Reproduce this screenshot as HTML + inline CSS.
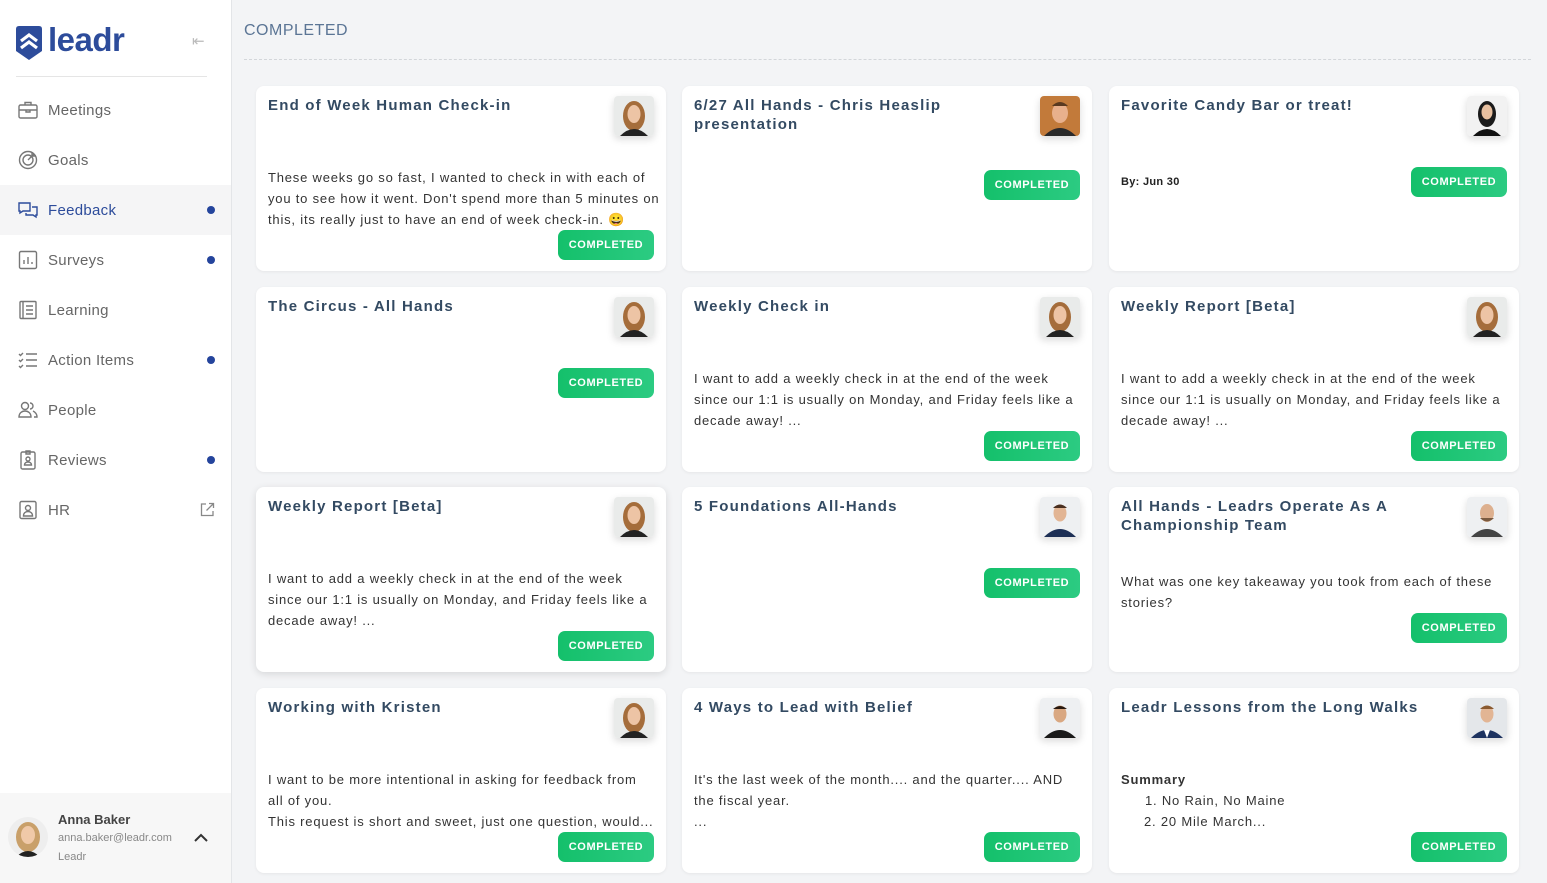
<!DOCTYPE html>
<html><head><meta charset="utf-8"><style>
*{box-sizing:border-box;margin:0;padding:0}
body{width:1547px;height:883px;overflow:hidden;background:#f3f4f6;font-family:"Liberation Sans",sans-serif;position:relative}
.sb{position:absolute;left:0;top:0;width:232px;height:883px;background:#fff;border-right:1px solid #e3e5e8}
.nav{position:absolute;left:0;width:231px;height:50px;display:flex;align-items:center;font-size:15px;color:#666;letter-spacing:.3px}
.nav svg{position:absolute;left:18px;top:15px}
.nav span{position:absolute;left:48px}
.dot{position:absolute;left:207px;width:8px;height:8px;border-radius:50%;background:#24449c}
.act{background:#f5f5f6;color:#2d4c9b}
.hdr{position:absolute;left:244px;top:22px;font-size:16px;color:#5b7595;letter-spacing:.5px}
.dash{position:absolute;left:244px;top:59px;width:1287px;border-top:1px dashed #d3d6da}
.card{position:absolute;width:410px;height:185px;background:#fff;border-radius:8px;box-shadow:0 1px 3px rgba(0,0,0,.06)}
.t{position:absolute;left:12px;top:10px;width:330px;font-size:15px;font-weight:bold;letter-spacing:1.2px;color:#334a62;line-height:19px}
.av{position:absolute;right:12px;top:10px;width:40px;height:40px;border-radius:4px;overflow:hidden;box-shadow:0 3px 8px rgba(0,0,0,.15)}
.b{position:absolute;left:12px;top:81px;width:392px;font-size:13px;line-height:21px;color:#333;letter-spacing:.8px}
.btn{position:absolute;right:12px;width:96px;height:30px;border-radius:7px;background:linear-gradient(90deg,#14c06b,#2ccb82);color:#fff;font-size:11px;font-weight:bold;letter-spacing:.6px;display:flex;align-items:center;justify-content:center}
</style></head><body>
<div class="sb">
 <svg style="position:absolute;left:16px;top:26px" width="26" height="34" viewBox="0 0 26 34"><path d="M0 3Q0 0 3 0H23Q26 0 26 3V25L13 34L0 25Z" fill="#2d4c9b"/><path d="M5 15L13 9L21 15M5 22L13 16L21 22" stroke="#fff" stroke-width="3.2" fill="none"/></svg>
 <div style="position:absolute;left:48px;top:21px;font-size:33px;font-weight:bold;color:#2d4c9b;letter-spacing:-.5px">leadr</div>
 <div style="position:absolute;left:192px;top:32px;font-size:15px;color:#bbb">⇤</div>
 <div style="position:absolute;left:16px;top:76px;width:191px;border-top:1px solid #e5e5e5"></div>
 <div class="nav" style="top:85px"><svg width="20" height="20" viewBox="0 0 20 20" fill="none" stroke="#777" stroke-width="1.4"><rect x="1" y="5" width="18" height="13" rx="1.5"/><path d="M7 5V2.5h6V5M1 10h18M8 10v2h4v-2"/></svg><span>Meetings</span></div>
 <div class="nav" style="top:135px"><svg width="20" height="20" viewBox="0 0 20 20" fill="none" stroke="#777" stroke-width="1.4"><circle cx="10" cy="10" r="8.5"/><circle cx="10" cy="10" r="5"/><path d="M10 10L16 4M14 2v4h4"/></svg><span>Goals</span></div>
 <div class="nav act" style="top:185px"><svg width="20" height="20" viewBox="0 0 20 20" fill="none" stroke="#2d4c9b" stroke-width="1.4"><path d="M1 3h11v8H5l-3 2v-2H1z"/><path d="M14 7h5v8h-1v2l-3-2H8v-2"/></svg><span>Feedback</span><i class="dot"></i></div>
 <div class="nav" style="top:235px"><svg width="20" height="20" viewBox="0 0 20 20" fill="none" stroke="#777" stroke-width="1.4"><rect x="1.5" y="1.5" width="17" height="17" rx="1.5"/><path d="M6 14v-4M10 14V7M14 14v-2"/></svg><span>Surveys</span><i class="dot"></i></div>
 <div class="nav" style="top:285px"><svg width="20" height="20" viewBox="0 0 20 20" fill="none" stroke="#777" stroke-width="1.4"><rect x="2" y="1.5" width="16" height="17" rx="1"/><path d="M5 1.5v17M8 6h7M8 10h7M8 14h7"/></svg><span>Learning</span></div>
 <div class="nav" style="top:335px"><svg width="20" height="20" viewBox="0 0 20 20" fill="none" stroke="#777" stroke-width="1.4"><path d="M1 4l1.5 1.5L5 3M1 10l1.5 1.5L5 9M1 16l1.5 1.5L5 15M8 4h11M8 10h11M8 16h11"/></svg><span>Action Items</span><i class="dot"></i></div>
 <div class="nav" style="top:385px"><svg width="20" height="20" viewBox="0 0 20 20" fill="none" stroke="#777" stroke-width="1.4"><circle cx="7" cy="6" r="3.5"/><path d="M1 17c0-4 3-6 6-6s6 2 6 6z"/><path d="M12 3a3 3 0 0 1 0 6M15 11c2 1 4 3 4 6h-3"/></svg><span>People</span></div>
 <div class="nav" style="top:435px"><svg width="20" height="20" viewBox="0 0 20 20" fill="none" stroke="#777" stroke-width="1.4"><rect x="3" y="2" width="14" height="17" rx="1.5"/><path d="M8 1h4v3H8z"/><circle cx="10" cy="9" r="2"/><path d="M6.5 15c0-2 1.5-3 3.5-3s3.5 1 3.5 3z"/></svg><span>Reviews</span><i class="dot"></i></div>
 <div class="nav" style="top:485px"><svg width="20" height="20" viewBox="0 0 20 20" fill="none" stroke="#777" stroke-width="1.4"><rect x="2" y="1.5" width="16" height="17" rx="1.5"/><circle cx="10" cy="8" r="2.5"/><path d="M5.5 16c0-3 2-4.5 4.5-4.5s4.5 1.5 4.5 4.5z"/></svg><span>HR</span><svg style="left:200px;top:17px" width="15" height="15" viewBox="0 0 15 15" fill="none" stroke="#888" stroke-width="1.3"><path d="M6 2H1.5v11.5H13V9M9 1.5h4.5V6M13.5 1.5L6.5 8.5"/></svg></div>
 <div style="position:absolute;left:0;top:793px;width:231px;height:90px;background:#f7f7f7">
  <div style="position:absolute;left:8px;top:24px;width:40px;height:40px;border-radius:50%;overflow:hidden;background:#eee"><svg width="40" height="40"><ellipse cx="20" cy="20" rx="12" ry="15" fill="#c9a06a"/><ellipse cx="20" cy="18" rx="7" ry="9" fill="#f0c9a8"/><path d="M8 40q12-12 24 0" fill="#222"/></svg></div>
  <div style="position:absolute;left:58px;top:19px;font-size:13px;font-weight:bold;color:#444">Anna Baker</div>
  <div style="position:absolute;left:58px;top:39px;font-size:11px;color:#888">anna.baker@leadr.com</div>
  <div style="position:absolute;left:58px;top:58px;font-size:11px;color:#888">Leadr</div>
  <svg style="position:absolute;left:194px;top:40px" width="14" height="9" viewBox="0 0 14 9" fill="none" stroke="#333" stroke-width="2"><path d="M1 8l6-6 6 6"/></svg>
 </div>
</div>
<div class="hdr">COMPLETED</div>
<div class="dash"></div>

<div class="card" style="left:256px;top:86px"><div class="t">End of Week Human Check-in</div><div class="av"><svg width="40" height="40"><rect width="40" height="40" fill="#e9ebea"/><ellipse cx="20" cy="20" rx="11" ry="15" fill="#a56d3b"/><ellipse cx="20" cy="18" rx="6.5" ry="9" fill="#edc4a5"/><path d="M6 40q14-14 28 0" fill="#222"/></svg></div>
<div class="b">These weeks go so fast, I wanted to check in with each of you to see how it went. Don't spend more than 5 minutes on this, its really just to have an end of week check-in. 😀</div><div class="btn" style="top:144px">COMPLETED</div></div>

<div class="card" style="left:682px;top:86px"><div class="t">6/27 All Hands - Chris Heaslip presentation</div><div class="av"><svg width="40" height="40"><rect width="40" height="40" fill="#c27a3a"/><ellipse cx="20" cy="17" rx="8" ry="10" fill="#e8b08c"/><path d="M12 10q8-8 16 0" fill="#5a3a20"/><path d="M4 40q16-16 32 0" fill="#2a2a2a"/></svg></div>
<div class="btn" style="top:84px">COMPLETED</div></div>

<div class="card" style="left:1109px;top:86px"><div class="t">Favorite Candy Bar or treat!</div><div class="av"><svg width="40" height="40"><rect width="40" height="40" fill="#f2f2f2"/><ellipse cx="20" cy="18" rx="9" ry="13" fill="#1b1b1b"/><ellipse cx="20" cy="16" rx="5.5" ry="7.5" fill="#e8c0a0"/><path d="M6 40q14-14 28 0" fill="#111"/></svg></div>
<div class="b" style="font-size:11px;font-weight:bold;top:86px;color:#222;letter-spacing:.3px">By: Jun 30</div><div class="btn" style="top:81px">COMPLETED</div></div>

<div class="card" style="left:256px;top:287px"><div class="t">The Circus - All Hands</div><div class="av"><svg width="40" height="40"><rect width="40" height="40" fill="#e9ebea"/><ellipse cx="20" cy="20" rx="11" ry="15" fill="#a56d3b"/><ellipse cx="20" cy="18" rx="6.5" ry="9" fill="#edc4a5"/><path d="M6 40q14-14 28 0" fill="#222"/></svg></div>
<div class="btn" style="top:81px">COMPLETED</div></div>

<div class="card" style="left:682px;top:287px"><div class="t">Weekly Check in</div><div class="av"><svg width="40" height="40"><rect width="40" height="40" fill="#e9ebea"/><ellipse cx="20" cy="20" rx="11" ry="15" fill="#a56d3b"/><ellipse cx="20" cy="18" rx="6.5" ry="9" fill="#edc4a5"/><path d="M6 40q14-14 28 0" fill="#222"/></svg></div>
<div class="b">I want to add a weekly check in at the end of the week since our 1:1 is usually on Monday, and Friday feels like a decade away! ...</div><div class="btn" style="top:144px">COMPLETED</div></div>

<div class="card" style="left:1109px;top:287px"><div class="t">Weekly Report [Beta]</div><div class="av"><svg width="40" height="40"><rect width="40" height="40" fill="#e9ebea"/><ellipse cx="20" cy="20" rx="11" ry="15" fill="#a56d3b"/><ellipse cx="20" cy="18" rx="6.5" ry="9" fill="#edc4a5"/><path d="M6 40q14-14 28 0" fill="#222"/></svg></div>
<div class="b">I want to add a weekly check in at the end of the week since our 1:1 is usually on Monday, and Friday feels like a decade away! ...</div><div class="btn" style="top:144px">COMPLETED</div></div>

<div class="card" style="left:256px;top:487px;box-shadow:0 2px 8px rgba(0,0,0,.12)"><div class="t">Weekly Report [Beta]</div><div class="av"><svg width="40" height="40"><rect width="40" height="40" fill="#e9ebea"/><ellipse cx="20" cy="20" rx="11" ry="15" fill="#a56d3b"/><ellipse cx="20" cy="18" rx="6.5" ry="9" fill="#edc4a5"/><path d="M6 40q14-14 28 0" fill="#222"/></svg></div>
<div class="b">I want to add a weekly check in at the end of the week since our 1:1 is usually on Monday, and Friday feels like a decade away! ...</div><div class="btn" style="top:144px">COMPLETED</div></div>

<div class="card" style="left:682px;top:487px"><div class="t">5 Foundations All-Hands</div><div class="av"><svg width="40" height="40"><rect width="40" height="40" fill="#eef0f2"/><ellipse cx="20" cy="16" rx="6.5" ry="8.5" fill="#e2b594"/><path d="M13 11q7-7 14 0" fill="#4a3020"/><path d="M4 40q16-16 32 0" fill="#1d2f55"/></svg></div>
<div class="btn" style="top:81px">COMPLETED</div></div>

<div class="card" style="left:1109px;top:487px"><div class="t">All Hands - Leadrs Operate As A Championship Team</div><div class="av"><svg width="40" height="40"><rect width="40" height="40" fill="#eef0f2"/><ellipse cx="20" cy="16" rx="7" ry="9" fill="#ddb08f"/><path d="M13 21q7 7 14 0" fill="#7a5a40"/><path d="M4 40q16-16 32 0" fill="#444"/></svg></div>
<div class="b" style="top:84px">What was one key takeaway you took from each of these stories?</div><div class="btn" style="top:126px">COMPLETED</div></div>

<div class="card" style="left:256px;top:688px"><div class="t">Working with Kristen</div><div class="av"><svg width="40" height="40"><rect width="40" height="40" fill="#e9ebea"/><ellipse cx="20" cy="20" rx="11" ry="15" fill="#a56d3b"/><ellipse cx="20" cy="18" rx="6.5" ry="9" fill="#edc4a5"/><path d="M6 40q14-14 28 0" fill="#222"/></svg></div>
<div class="b" style="white-space:nowrap">I want to be more intentional in asking for feedback from<br>all of you.<br>This request is short and sweet, just one question, would...</div><div class="btn" style="top:144px">COMPLETED</div></div>

<div class="card" style="left:682px;top:688px"><div class="t">4 Ways to Lead with Belief</div><div class="av"><svg width="40" height="40"><rect width="40" height="40" fill="#eef0f2"/><ellipse cx="20" cy="16" rx="6.5" ry="8.5" fill="#d9a882"/><path d="M13 11q7-6 14 0" fill="#2a1a10"/><path d="M4 40q16-16 32 0" fill="#1a1a1a"/></svg></div>
<div class="b">It's the last week of the month.... and the quarter.... AND the fiscal year.<br>...</div><div class="btn" style="top:144px">COMPLETED</div></div>

<div class="card" style="left:1109px;top:688px"><div class="t">Leadr Lessons from the Long Walks</div><div class="av"><svg width="40" height="40"><rect width="40" height="40" fill="#e4e7ea"/><ellipse cx="20" cy="16" rx="6.5" ry="8.5" fill="#e2b594"/><path d="M13 11q7-7 14 0" fill="#8a5a30"/><path d="M4 40q16-16 32 0" fill="#1e3360"/><path d="M17 32l3 8 3-8z" fill="#fff"/></svg></div>
<div class="b"><b>Summary</b><br><span style="padding-left:24px">1. No Rain, No Maine</span><br><span style="padding-left:23px">2. 20 Mile March...</span></div><div class="btn" style="top:144px">COMPLETED</div></div>
</body></html>
